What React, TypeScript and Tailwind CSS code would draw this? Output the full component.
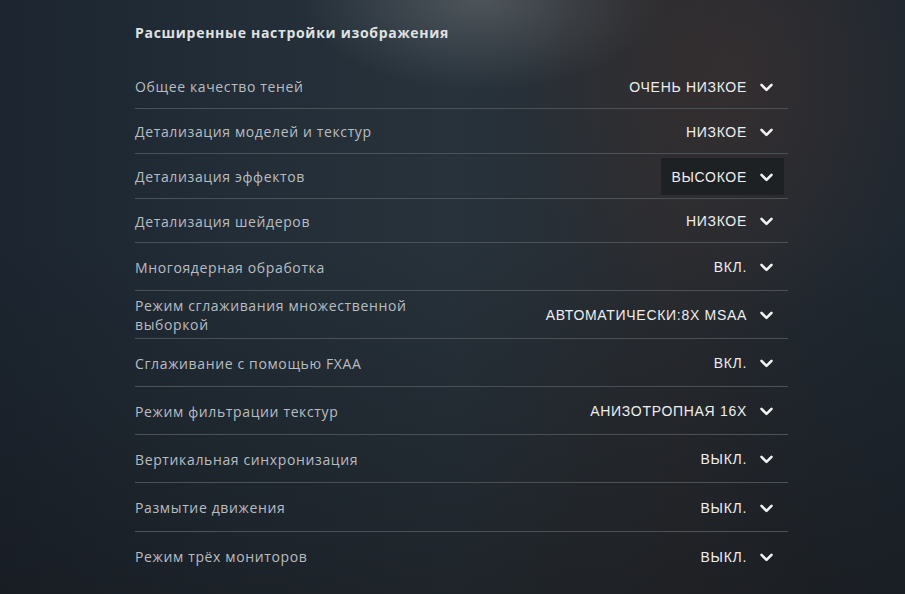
import { FC } from 'react';

type Setting = { label: string; value: string; h: string; active?: boolean };

const settings: Setting[] = [
  { label: 'Общее качество теней', value: 'ОЧЕНЬ НИЗКОЕ', h: 'h-[45px]' },
  { label: 'Детализация моделей и текстур', value: 'НИЗКОЕ', h: 'h-[45px]' },
  { label: 'Детализация эффектов', value: 'ВЫСОКОЕ', h: 'h-[45px]', active: true },
  { label: 'Детализация шейдеров', value: 'НИЗКОЕ', h: 'h-[44px]' },
  { label: 'Многоядерная обработка', value: 'ВКЛ.', h: 'h-[48px]' },
  { label: 'Режим сглаживания множественной выборкой', value: 'АВТОМАТИЧЕСКИ:8X MSAA', h: 'h-[48px]' },
  { label: 'Сглаживание с помощью FXAA', value: 'ВКЛ.', h: 'h-[48px]' },
  { label: 'Режим фильтрации текстур', value: 'АНИЗОТРОПНАЯ 16X', h: 'h-[48px]' },
  { label: 'Вертикальная синхронизация', value: 'ВЫКЛ.', h: 'h-[48px]' },
  { label: 'Размытие движения', value: 'ВЫКЛ.', h: 'h-[49px]' },
  { label: 'Режим трёх мониторов', value: 'ВЫКЛ.', h: 'h-[48px]' },
];

const Chevron: FC = () => (
  <svg width="13" height="9" viewBox="0 0 13 9" className="shrink-0">
    <polyline points="1.5,1.8 6.5,6.8 11.5,1.8" fill="none" stroke="#f2f2f2" strokeWidth="2.6" strokeLinecap="round" strokeLinejoin="round" />
  </svg>
);

const Row: FC<{ setting: Setting; last: boolean }> = ({ setting, last }) => (
  <div
    className={`flex items-center justify-between pr-[4px] ${setting.h} ${last ? '' : 'border-b border-[#4b5157]'}`}
  >
    <div className="w-[290px] pt-[1px] text-[14px] leading-[19px] tracking-[0.045em] text-[#b9bdc1] font-medium font-['Open_Sans',sans-serif]">
      {setting.label}
    </div>
    <div
      className={`flex items-center gap-[13px] h-[37px] pl-[10px] pr-[11px] pt-[2px] ${setting.active ? 'bg-[#1d2024]/90' : ''}`}
    >
      <span className="text-[14px] tracking-[0.05em] text-[#eeeeee] font-['Liberation_Sans',sans-serif]">
        {setting.value}
      </span>
      <Chevron />
    </div>
  </div>
);

export default function App() {
  return (
    <div className="relative min-h-screen w-full overflow-hidden bg-[#232c34]">
      <div className="absolute inset-0 bg-[linear-gradient(90deg,#1c2530_0%,#222d37_25%,#27323b_50%,#282b30_75%,#202830_92%,#1e2730_100%)]" />
      <div className="absolute inset-0 bg-[radial-gradient(ellipse_180px_90px_at_480px_0px,rgba(150,150,150,0.35),transparent)]" />
      <div className="absolute inset-0 bg-[radial-gradient(ellipse_220px_260px_at_740px_80px,rgba(70,52,48,0.45),transparent)]" />
      <div className="absolute inset-0 bg-[linear-gradient(180deg,transparent_40%,rgba(20,20,22,0.45)_100%)]" />
      <div className="relative pl-[135px] pt-[23px]">
        <div className="w-[653px]">
          <div className="h-[20px] text-[14px] leading-[20px] font-bold tracking-[0.05em] text-[#dfe1e3] font-['Open_Sans',sans-serif]">
            Расширенные настройки изображения
          </div>
          <div className="mt-[21px]">
            {settings.map((s, i) => (
              <Row key={s.label} setting={s} last={i === settings.length - 1} />
            ))}
          </div>
        </div>
      </div>
    </div>
  );
}
